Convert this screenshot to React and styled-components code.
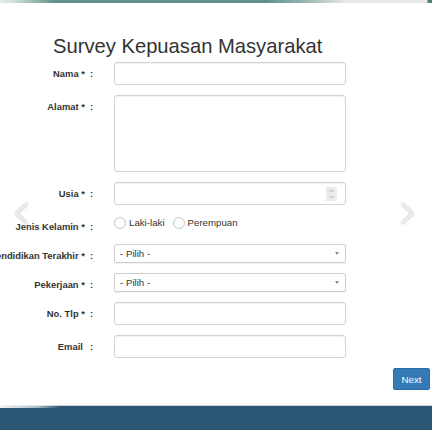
import React from "react";
import styled, { createGlobalStyle } from "styled-components";

const Global = createGlobalStyle`
  html, body { margin: 0; padding: 0; background: #fff; }
  body {
    font-family: "Liberation Sans", Arial, sans-serif;
    color: #333;
    overflow: hidden;
  }
  * { box-sizing: border-box; }
`;

const Page = styled.div`
  position: relative;
  width: 432px;
  height: 430px;
  display: flex;
  flex-direction: column;
  overflow: hidden;
`;

const TopStrip = styled.div`
  height: 3px;
  flex: none;
  background: linear-gradient(
    90deg,
    #e9e9e9 0px,
    #d3dfdc 14px,
    #5e9188 55px,
    #5e9188 265px,
    #9fbcb7 310px,
    #e6e9e8 345px,
    #e9e9e9 427px,
    #4d7f77 428px,
    #4d7f77 432px
  );
`;

const Title = styled.h2`
  margin: 32px 0 5px 53px;
  font-size: 20.2px;
  line-height: 22px;
  font-weight: normal;
  color: #333;
  white-space: nowrap;
`;

const Form = styled.form`
  display: flex;
  flex-direction: column;
  gap: 10px;
  margin: 0;
`;

const Row = styled.div`
  display: grid;
  grid-template-columns: 93px 232px;
  column-gap: 21px;
  min-height: ${(p) => p.$minH || 0}px;
`;

const Label = styled.label`
  display: flex;
  justify-content: flex-end;
  padding-top: 5px;
  font-weight: bold;
  font-size: 9.4px;
  line-height: 14px;
  white-space: nowrap;
  min-width: 0;
  color: #333;
`;

const Colon = styled.span`
  margin-left: ${(p) => p.$gap || 5}px;
`;

const TextInput = styled.input`
  display: block;
  width: 100%;
  height: 23px;
  margin: 0;
  padding: 0 6px;
  border: 1px solid #d3d3d3;
  border-radius: 3px;
  background: #fff;
  box-shadow: inset 0 1px 1px rgba(0, 0, 0, 0.06);
  font: 9.6px "Liberation Sans", Arial, sans-serif;
  color: #555;
  outline: none;
`;

const TextArea = styled.textarea`
  display: block;
  width: 100%;
  height: 77px;
  margin: 0;
  padding: 4px 6px;
  border: 1px solid #d3d3d3;
  border-radius: 3px;
  background: #fff;
  box-shadow: inset 0 1px 1px rgba(0, 0, 0, 0.06);
  font: 9.6px "Liberation Sans", Arial, sans-serif;
  resize: none;
  outline: none;
`;

const NumberBox = styled.div`
  display: flex;
  align-items: center;
  height: 23px;
  padding: 0 8px 0 6px;
  border: 1px solid #d3d3d3;
  border-radius: 3px;
  background: #fff;
  box-shadow: inset 0 1px 1px rgba(0, 0, 0, 0.06);
`;

const BareInput = styled.input`
  flex: 1;
  min-width: 0;
  border: 0;
  padding: 0;
  margin: 0;
  background: transparent;
  font: 9.6px "Liberation Sans", Arial, sans-serif;
  outline: none;
`;

const RadioGroup = styled.div`
  display: flex;
  align-items: center;
  padding-top: 1px;
  height: 14px;
  font-size: 9.7px;
  line-height: 14px;
  color: #333;
`;

const RadioItem = styled.span`
  display: flex;
  align-items: center;
  gap: 3px;
  margin-right: 8px;
  white-space: nowrap;
`;

const RadioCircle = styled.span`
  display: block;
  width: 12px;
  height: 12px;
  border-radius: 50%;
  border: 1px solid #c9c9c9;
  background: radial-gradient(circle at 50% 50%, #fff 55%, #f1f1f1 100%);
`;

const SelectBox = styled.div`
  display: flex;
  align-items: center;
  justify-content: space-between;
  height: 19px;
  padding: 0 6px 0 5px;
  border: 1px solid #d0d0d0;
  border-radius: 2px;
  background: #fff;
  box-shadow: 0 1px 1px rgba(0, 0, 0, 0.06);
  font-size: 9.7px;
  color: #333;
`;

const Caret = styled.span`
  width: 0;
  height: 0;
  border-left: 2.5px solid transparent;
  border-right: 2.5px solid transparent;
  border-top: 3px solid #8a8a8a;
`;

const ButtonRow = styled.div`
  display: flex;
  justify-content: flex-end;
  padding-right: 2px;
  margin-top: 10px;
`;

const NextButton = styled.button`
  width: 37px;
  height: 22px;
  padding: 0;
  border: 1px solid #2e6da4;
  border-radius: 2px;
  background: #337ab7;
  color: #fff;
  font: 9.8px "Liberation Sans", Arial, sans-serif;
  cursor: pointer;
`;

const Band = styled.div`
  position: relative;
  margin-top: auto;
  height: 25px;
  flex: none;
  background: #2b5674;
  border-top: 1px solid #cfd3d6;
  &::before {
    content: "";
    position: absolute;
    top: -1px;
    left: 0;
    width: 60px;
    height: 3px;
    background: linear-gradient(90deg, #f3f3f3 0%, rgba(235, 238, 240, 0.7) 60%, rgba(43, 86, 116, 0) 100%);
  }
`;

const Arrow = styled.div`
  position: absolute;
  top: 202px;
  left: ${(p) => p.$left}px;
  width: 15px;
  height: 23px;
  filter: drop-shadow(0 0 1px rgba(0, 0, 0, 0.35));
`;

const Spinner = () => (
  <svg width="11" height="14" viewBox="0 0 11 14">
    <rect x="0" y="0" width="11" height="14" fill="#ececec" />
    <polyline points="3.5,5 5.5,3 7.5,5" fill="none" stroke="#9a9a9a" strokeWidth="0.8" />
    <polyline points="3.5,9 5.5,11 7.5,9" fill="none" stroke="#9a9a9a" strokeWidth="0.8" />
  </svg>
);

const Chevron = ({ dir }) => (
  <svg width="15" height="23" viewBox="0 0 15 23">
    <polyline
      points={dir === "left" ? "13,1.5 2.5,11.5 13,21.5" : "2,1.5 12.5,11.5 2,21.5"}
      fill="none"
      stroke="#f0f0f0"
      strokeWidth="2"
    />
  </svg>
);

const Field = ({ label, req = true, gap, minH, children }) => (
  <Row $minH={minH}>
    <Label>
      <span>
        {label}
        {req ? " *" : ""}
      </span>
      <Colon $gap={gap}>:</Colon>
    </Label>
    {children}
  </Row>
);

export default function App() {
  return (
    <>
      <Global />
      <Page>
        <TopStrip />
        <Title>Survey Kepuasan Masyarakat</Title>
        <Form onSubmit={(e) => e.preventDefault()}>
          <Field label="Nama">
            <TextInput type="text" />
          </Field>
          <Field label="Alamat">
            <TextArea />
          </Field>
          <Field label="Usia">
            <NumberBox>
              <BareInput type="text" />
              <Spinner />
            </NumberBox>
          </Field>
          <Field label="Jenis Kelamin" minH={19}>
            <RadioGroup>
              <RadioItem>
                <RadioCircle />
                Laki-laki
              </RadioItem>
              <RadioItem>
                <RadioCircle />
                Perempuan
              </RadioItem>
            </RadioGroup>
          </Field>
          <Field label="Pendidikan Terakhir">
            <SelectBox>
              <span>- Pilih -</span>
              <Caret />
            </SelectBox>
          </Field>
          <Field label="Pekerjaan">
            <SelectBox>
              <span>- Pilih -</span>
              <Caret />
            </SelectBox>
          </Field>
          <Field label="No. Tlp">
            <TextInput type="text" />
          </Field>
          <Field label="Email" req={false} gap={7}>
            <TextInput type="text" />
          </Field>
        </Form>
        <ButtonRow>
          <NextButton type="button">Next</NextButton>
        </ButtonRow>
        <Band />
        <Arrow $left={14}>
          <Chevron dir="left" />
        </Arrow>
        <Arrow $left={400}>
          <Chevron dir="right" />
        </Arrow>
      </Page>
    </>
  );
}
